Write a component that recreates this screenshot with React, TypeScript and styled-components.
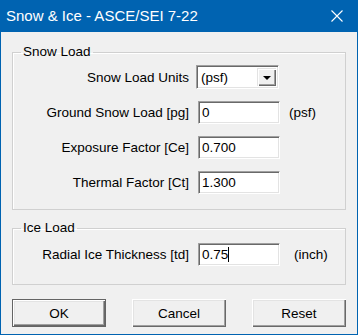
import React from 'react';
import styled, { createGlobalStyle } from 'styled-components';

const GlobalStyle = createGlobalStyle`
  html, body {
    margin: 0;
    padding: 0;
    background: #f0f0f0;
  }
  * {
    box-sizing: border-box;
  }
`;

const Window = styled.div`
  width: 358px;
  height: 335px;
  background: #f0f0f0;
  border: 1px solid #0063b1;
  border-top: none;
  display: flex;
  flex-direction: column;
  font-family: 'Liberation Sans', Arial, sans-serif;
  font-size: 13.5px;
  color: #000;
`;

const TitleBar = styled.div`
  height: 32px;
  margin: 0 -1px;
  background: #0063b1;
  color: #fff;
  display: flex;
  align-items: center;
  justify-content: space-between;
  padding: 0 15px 0 6px;
`;

const Title = styled.span`
  font-size: 15px;
  padding-bottom: 1px;
`;

const Body = styled.div`
  padding: 12px 11px 0 11px;
  display: flex;
  flex-direction: column;
`;

const Group = styled.fieldset<{ $gapTop?: number; $padTop: number; $padBottom: number }>`
  margin: ${({ $gapTop }) => $gapTop ?? 0}px 0 0 0;
  padding: ${({ $padTop }) => $padTop}px 0 ${({ $padBottom }) => $padBottom}px 0;
  border: 1px solid #d0d0d0;
  box-shadow: inset 1px 1px 0 #fff;
  min-width: 0;
`;

const Legend = styled.legend`
  margin-left: 8px;
  padding: 0 2px;
  line-height: 16px;
`;

const Rows = styled.div`
  display: grid;
  grid-template-columns: 176px 82px auto;
  grid-auto-rows: 24px;
  column-gap: 9px;
  row-gap: 11px;
  align-items: center;
`;

const Label = styled.span`
  text-align: right;
  white-space: nowrap;
`;

const Field = styled.div`
  height: 23px;
  width: 82px;
  background: #fff;
  border: 1px solid;
  border-color: #a0a0a0 #fff #fff #a0a0a0;
  box-shadow: inset 1px 1px 0 #696969, inset -1px -1px 0 #e3e3e3;
  padding: 0 3px;
  display: flex;
  align-items: center;
  white-space: nowrap;
`;

const Caret = styled.span`
  display: inline-block;
  width: 1px;
  height: 15px;
  background: #000;
`;

const Unit = styled.span<{ $shift?: number }>`
  margin-left: ${({ $shift }) => $shift ?? 0}px;
  white-space: nowrap;
`;

const Combo = styled.div`
  height: 24px;
  width: 83px;
  margin-left: -2px;
  background: #fff;
  border: 1px solid;
  border-color: #a0a0a0 #fff #fff #a0a0a0;
  box-shadow: inset 1px 1px 0 #696969, inset -1px -1px 0 #e3e3e3;
  padding: 2px 2px 2px 4px;
  display: flex;
  align-items: center;
  justify-content: space-between;
`;

const DropButton = styled.div`
  width: 19px;
  height: 100%;
  background: #f0f0f0;
  box-shadow: inset 1px 1px 0 #e3e3e3, inset 2px 2px 0 #fff, inset -1px -1px 0 #696969,
    inset -2px -2px 0 #a0a0a0;
  display: flex;
  align-items: center;
  justify-content: center;
`;

const Arrow = styled.span`
  width: 0;
  height: 0;
  border-left: 4px solid transparent;
  border-right: 4px solid transparent;
  border-top: 4px solid #000;
  margin-top: 1px;
`;

const ButtonRow = styled.div`
  margin-top: 14px;
  display: flex;
  justify-content: space-between;
`;

const Button = styled.button<{ $default?: boolean }>`
  width: 94px;
  height: 28px;
  font-family: inherit;
  font-size: 13.5px;
  color: #000;
  background: #f0f0f0;
  padding: 0;
  border: ${({ $default }) => ($default ? '1px solid #646464' : 'none')};
  box-shadow: inset 1px 1px 0 #fff, inset -1px -1px 0 #696969, inset -2px -2px 0 #a0a0a0,
    inset 2px 2px 0 #e3e3e3;
`;

const CloseIcon = () => (
  <svg width="12" height="12" viewBox="0 0 12 12">
    <path d="M0.5 0.5 L11.5 11.5 M11.5 0.5 L0.5 11.5" stroke="#fff" strokeWidth="1.1" />
  </svg>
);

const App: React.FC = () => {
  return (
    <>
      <GlobalStyle />
      <Window>
        <TitleBar>
          <Title>Snow &amp; Ice - ASCE/SEI 7-22</Title>
          <CloseIcon />
        </TitleBar>
        <Body>
          <Group $padTop={5} $padBottom={15}>
            <Legend>Snow Load</Legend>
            <Rows>
              <Label>Snow Load Units</Label>
              <Combo>
                <span>(psf)</span>
                <DropButton>
                  <Arrow />
                </DropButton>
              </Combo>
              <span />
              <Label>Ground Snow Load [pg]</Label>
              <Field>0</Field>
              <Unit>(psf)</Unit>
              <Label>Exposure Factor [Ce]</Label>
              <Field>0.700</Field>
              <span />
              <Label>Thermal Factor [Ct]</Label>
              <Field>1.300</Field>
              <span />
            </Rows>
          </Group>
          <Group $gapTop={10} $padTop={6} $padBottom={18}>
            <Legend>Ice Load</Legend>
            <Rows>
              <Label>Radial Ice Thickness [td]</Label>
              <Field>
                0.75
                <Caret />
              </Field>
              <Unit $shift={5}>(inch)</Unit>
            </Rows>
          </Group>
          <ButtonRow>
            <Button $default>OK</Button>
            <Button>Cancel</Button>
            <Button>Reset</Button>
          </ButtonRow>
        </Body>
      </Window>
    </>
  );
};

export default App;
